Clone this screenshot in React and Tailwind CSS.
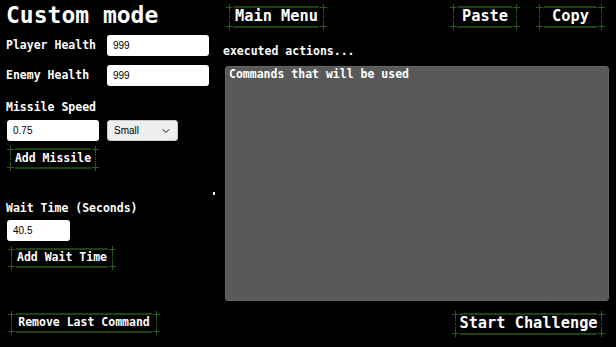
import React from "react";
import { ChevronDown } from "lucide-react";

function Cross({ pos }) {
  return (
    <span className={`absolute w-[7px] h-[7px] ${pos}`}>
      <span className="absolute left-0 right-0 top-[3px] h-px bg-[#2a5a1c]" />
      <span className="absolute top-0 bottom-0 left-[3px] w-px bg-[#2a5a1c]" />
    </span>
  );
}

function Btn({ size, text, children }) {
  return (
    <div className={`relative flex items-center justify-center shrink-0 ${size} ${text}`}>
      <span className="absolute left-[8px] right-[8px] top-[2px] h-[2px] bg-[#1c4212]" />
      <span className="absolute left-[8px] right-[8px] bottom-[2px] h-[2px] bg-[#1c4212]" />
      <span className="absolute left-[3px] top-[7px] bottom-[7px] border-l border-dashed border-[#23501a]" />
      <span className="absolute right-[3px] top-[7px] bottom-[7px] border-r border-dashed border-[#23501a]" />
      <Cross pos="left-0 top-0" />
      <Cross pos="right-0 top-0" />
      <Cross pos="left-0 bottom-0" />
      <Cross pos="right-0 bottom-0" />
      <span className="relative leading-none text-white">{children}</span>
    </div>
  );
}

function Field({ w, children }) {
  return (
    <div
      className={`h-[21px] ${w} rounded-[3px] bg-white flex items-center pl-[6px] text-[10px] text-black font-normal`}
      style={{ fontFamily: '"Liberation Sans", Arial, sans-serif' }}
    >
      {children}
    </div>
  );
}

export default function App() {
  return (
    <div
      className="relative w-[616px] h-[347px] bg-black text-white font-bold flex overflow-hidden"
      style={{ fontFamily: '"DejaVu Sans Mono", "Liberation Mono", monospace' }}
    >
      {/* left column */}
      <div className="w-[223px] h-full flex flex-col pl-[6px] text-[11.5px]">
        <div className="h-[30px] text-[23px] leading-[30px]">Custom mode</div>

        <div className="mt-[5px] h-[21px] flex items-center">
          <div className="w-[101px] leading-none">Player Health</div>
          <Field w="w-[102px]">999</Field>
        </div>
        <div className="mt-[9px] h-[21px] flex items-center">
          <div className="w-[101px] leading-none">Enemy Health</div>
          <Field w="w-[102px]">999</Field>
        </div>

        <div className="mt-[13px] h-[16px] leading-[16px]">Missile Speed</div>
        <div className="mt-[5px] flex items-center gap-[8px] pl-px">
          <Field w="w-[92px]">0.75</Field>
          <div
            className="h-[21px] w-[71px] rounded-[3px] bg-[#efefef] border border-[#c8c8c8] flex items-center justify-between pl-[6px] pr-[5px] text-[10px] text-black font-normal"
            style={{ fontFamily: '"Liberation Sans", Arial, sans-serif' }}
          >
            <span>Small</span>
            <ChevronDown size={12} strokeWidth={1.8} />
          </div>
        </div>

        <div className="mt-[5px] ml-px">
          <Btn size="w-[92px] h-[25px]" text="text-[11.5px]">Add Missile</Btn>
        </div>

        <div className="mt-[29px] h-[16px] leading-[16px]">Wait Time (Seconds)</div>
        <div className="mt-[4px] pl-px">
          <Field w="w-[63px]">40.5</Field>
        </div>
        <div className="mt-[5px] ml-[2px]">
          <Btn size="w-[108px] h-[24px]" text="text-[11.5px]">Add Wait Time</Btn>
        </div>

        <div className="mt-auto mb-[12px] ml-[2px]">
          <Btn size="w-[152px] h-[24px]" text="text-[11.5px]">Remove Last Command</Btn>
        </div>
      </div>

      {/* right column */}
      <div className="flex-1 h-full flex flex-col">
        <div className="mt-[4px] flex items-center">
          <div className="ml-[3px]">
            <Btn size="w-[101px] h-[26px]" text="text-[15.3px]">Main Menu</Btn>
          </div>
          <div className="ml-auto flex gap-[16px] mr-[11px]">
            <Btn size="w-[70px] h-[26px]" text="text-[15.3px]">Paste</Btn>
            <Btn size="w-[69px] h-[26px]" text="text-[15.3px]">Copy</Btn>
          </div>
        </div>

        <div className="mt-[13px] h-[16px] leading-[16px] text-[11.5px]">executed actions...</div>

        <div className="mt-[7px] ml-[2px] w-[384px] h-[235px] rounded-[3px] bg-[#595959] border border-[#666666] pl-[3px] text-[11.5px] leading-[14px]">
          Commands that will be used
        </div>

        <div className="mt-[10px] self-end mr-[11px]">
          <Btn size="w-[153px] h-[26px]" text="text-[15.3px]">Start Challenge</Btn>
        </div>
      </div>

      <span className="absolute left-[213px] top-[192px] w-[2px] h-[3px] bg-white" />
    </div>
  );
}
